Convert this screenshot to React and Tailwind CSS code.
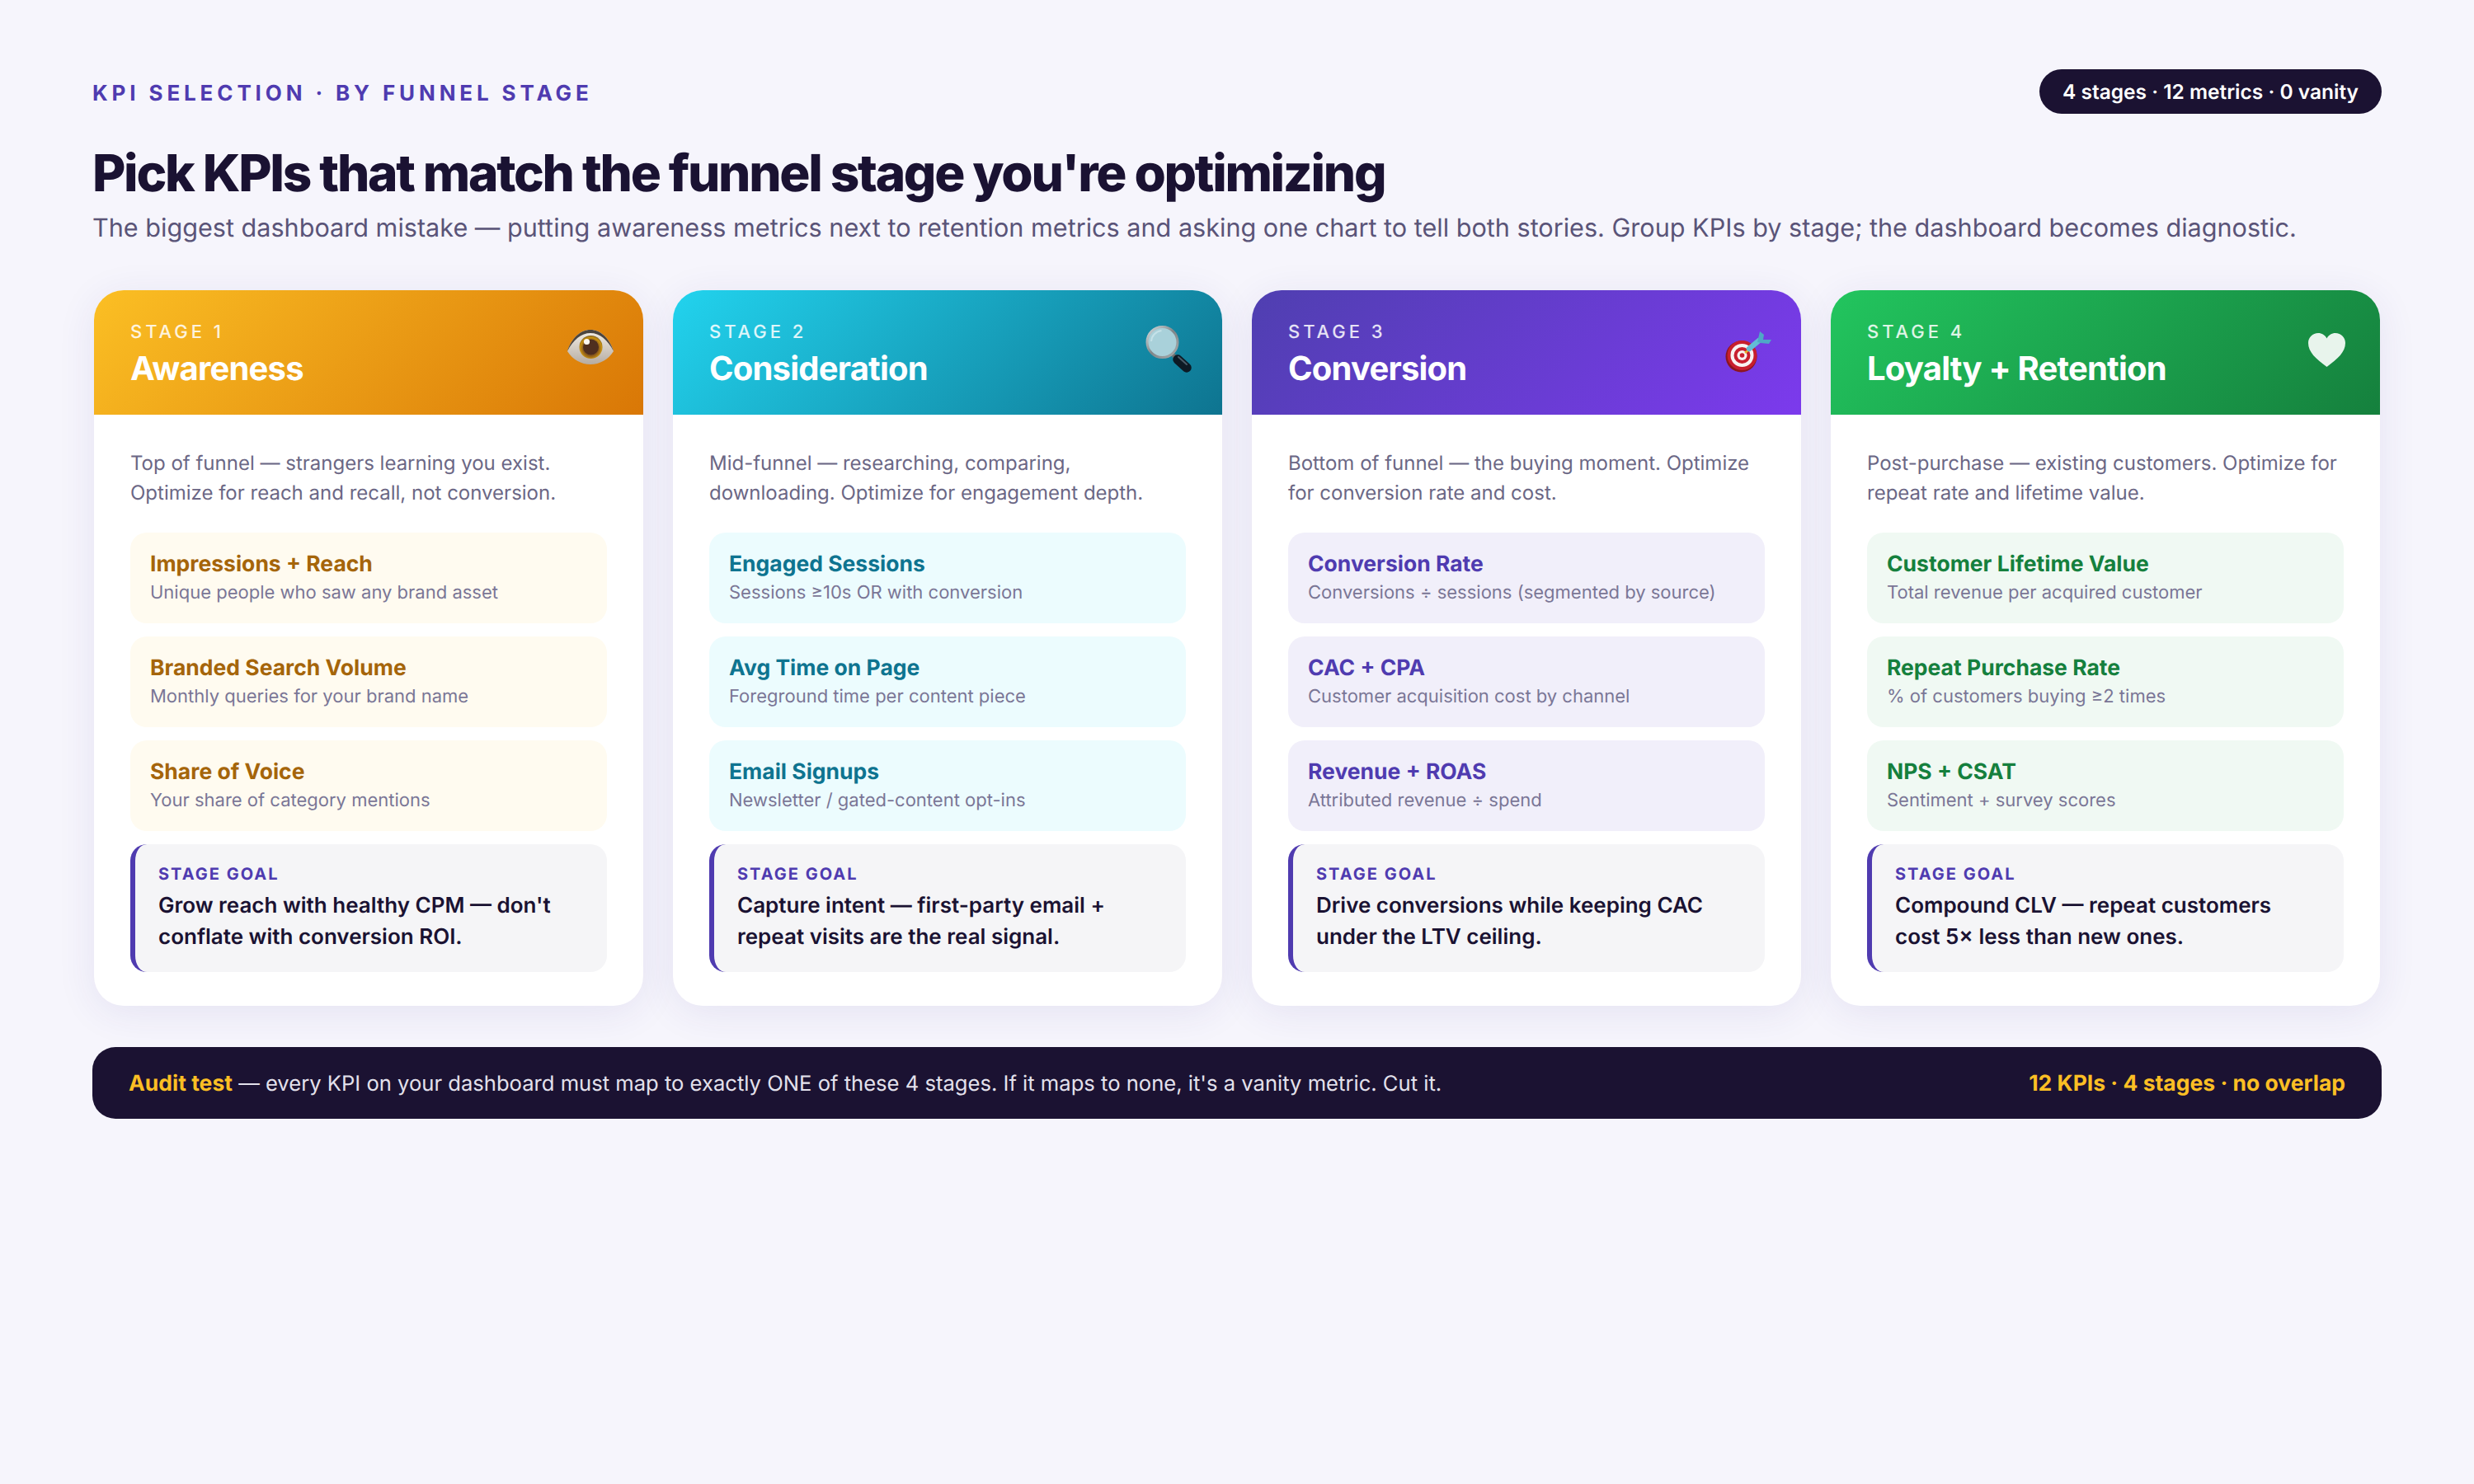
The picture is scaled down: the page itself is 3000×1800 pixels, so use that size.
const stages = [
  {
    label: "STAGE 1",
    name: "Awareness",
    header: "bg-[linear-gradient(135deg,#fbbf24,#d97706)]",
    icon: "eye",
    desc: ["Top of funnel — strangers learning you exist.", "Optimize for reach and recall, not conversion."],
    box: "bg-[#fffbf0]",
    title: "text-[#a5650a]",
    kpis: [
      ["Impressions + Reach", "Unique people who saw any brand asset"],
      ["Branded Search Volume", "Monthly queries for your brand name"],
      ["Share of Voice", "Your share of category mentions"],
    ],
    goal: ["Grow reach with healthy CPM — don't", "conflate with conversion ROI."],
  },
  {
    label: "STAGE 2",
    name: "Consideration",
    header: "bg-[linear-gradient(135deg,#22d3ee,#0e7490)]",
    icon: "search",
    desc: ["Mid-funnel — researching, comparing,", "downloading. Optimize for engagement depth."],
    box: "bg-[#ecfcfe]",
    title: "text-[#0e7490]",
    kpis: [
      ["Engaged Sessions", "Sessions ≥10s OR with conversion"],
      ["Avg Time on Page", "Foreground time per content piece"],
      ["Email Signups", "Newsletter / gated-content opt-ins"],
    ],
    goal: ["Capture intent — first-party email +", "repeat visits are the real signal."],
  },
  {
    label: "STAGE 3",
    name: "Conversion",
    header: "bg-[linear-gradient(135deg,#4f3fb0,#7c3aed)]",
    icon: "target",
    desc: ["Bottom of funnel — the buying moment. Optimize", "for conversion rate and cost."],
    box: "bg-[#f1effa]",
    title: "text-[#4f3bb0]",
    kpis: [
      ["Conversion Rate", "Conversions ÷ sessions (segmented by source)"],
      ["CAC + CPA", "Customer acquisition cost by channel"],
      ["Revenue + ROAS", "Attributed revenue ÷ spend"],
    ],
    goal: ["Drive conversions while keeping CAC", "under the LTV ceiling."],
  },
  {
    label: "STAGE 4",
    name: "Loyalty + Retention",
    header: "bg-[linear-gradient(135deg,#22c55e,#15803d)]",
    icon: "heart",
    desc: ["Post-purchase — existing customers. Optimize for", "repeat rate and lifetime value."],
    box: "bg-[#f0f9f3]",
    title: "text-[#15803d]",
    kpis: [
      ["Customer Lifetime Value", "Total revenue per acquired customer"],
      ["Repeat Purchase Rate", "% of customers buying ≥2 times"],
      ["NPS + CSAT", "Sentiment + survey scores"],
    ],
    goal: ["Compound CLV — repeat customers", "cost 5× less than new ones."],
  },
];

function StageIcon({ name }) {
  if (name === "eye") {
    return (
      <svg width="56" height="56" viewBox="0 0 56 56" className="overflow-visible">
        <defs>
          <linearGradient id="sclera" x1="0" y1="0" x2="0" y2="1">
            <stop offset="0" stopColor="#f4efe6" />
            <stop offset="1" stopColor="#b5aca2" />
          </linearGradient>
          <radialGradient id="iris" cx="0.5" cy="0.55" r="0.55">
            <stop offset="0.6" stopColor="#8a5a1c" />
            <stop offset="0.85" stopColor="#c9920f" />
            <stop offset="1" stopColor="#7a5a22" />
          </radialGradient>
        </defs>
        <path d="M0 30C5 14 16 4 28 4s23 10 28 26C50 40 39 46 28 46S6 40 0 30Z" fill="url(#sclera)" />
        <path d="M0 30C5 14 16 4 28 4s23 10 28 26C49 16 39 8 28 8S7 16 0 30Z" fill="#4c453f" />
        <circle cx="28.5" cy="25" r="14" fill="url(#iris)" />
        <circle cx="28.5" cy="25" r="9.5" fill="#4f2f1f" />
        <circle cx="23.5" cy="18.5" r="3.6" fill="#fdf8f0" />
      </svg>
    );
  }
  if (name === "search") {
    return (
      <svg width="56" height="56" viewBox="0 0 56 56" className="overflow-visible">
        <defs>
          <linearGradient id="ring" x1="0" y1="0" x2="1" y2="1">
            <stop offset="0" stopColor="#d5dde0" />
            <stop offset="0.5" stopColor="#7f8689" />
            <stop offset="1" stopColor="#a9adae" />
          </linearGradient>
        </defs>
        <path d="M30 32l6 6" stroke="#6b7072" strokeWidth="5" />
        <path d="M38 40l11 10" stroke="#0d1a24" strokeWidth="11.5" strokeLinecap="round" />
        <path d="M39 37l10 9" stroke="#4a5a66" strokeWidth="2" strokeLinecap="round" />
        <circle cx="19.5" cy="19" r="18.5" fill="#a9d1da" stroke="url(#ring)" strokeWidth="3" />
        <path d="M6 18A14 14 0 0 1 18.5 5" fill="none" stroke="#c5e2e8" strokeWidth="2" />
      </svg>
    );
  }
  if (name === "target") {
    return (
      <svg width="56" height="56" viewBox="0 0 56 56" className="overflow-visible">
        <circle cx="19.5" cy="36.5" r="19" fill="#8c1620" />
        <circle cx="20.5" cy="35" r="18" fill="#c81f2e" />
        <circle cx="20.5" cy="35" r="14" fill="#f8f3f2" />
        <circle cx="20.5" cy="35" r="10" fill="#c81f2e" />
        <circle cx="20.5" cy="35" r="6" fill="#f8f3f2" />
        <circle cx="20.5" cy="35" r="2.8" fill="#c81f2e" />
        <path d="M24 32l5-4" stroke="#e8b32a" strokeWidth="2.5" />
        <path d="M29 27L41 17" stroke="#62bcd6" strokeWidth="6.5" strokeLinecap="round" />
        <path d="M39 19l3-13 5 4-1 6 10 0-3 5-10-1z" fill="#4fa8c6" />
      </svg>
    );
  }
  return (
    <svg width="56" height="56" viewBox="0 0 56 56" className="overflow-visible">
      <path
        d="M27.5 49C14 39 5 31 5 20 5 13 10.5 8 17 8c4.500 0 8.500 2.500 10.500 6.500C29.500 10.500 33.500 8 38 8c6.500 0 12 5 12 12 0 11-9 19-22.500 29Z"
        fill="#ffffff"
        fillOpacity="0.9"
      />
    </svg>
  );
}

function StageCard({ stage }) {
  return (
    <div className="flex flex-col overflow-hidden rounded-[36px] bg-white shadow-[0_8px_48px_rgba(60,40,140,0.09)]">
      <div className={`flex h-[151px] items-start justify-between pt-[37px] pr-[36px] pl-[44px] ${stage.header}`}>
        <div>
          <div className="text-[22px] leading-[28px] font-medium tracking-[0.18em] text-white/85">{stage.label}</div>
          <div className="mt-[4px] text-[40px] leading-[52px] font-bold tracking-[-0.02em] text-white">{stage.name}</div>
        </div>
        <div className="mt-[7px]">
          <StageIcon name={stage.icon} />
        </div>
      </div>
      <div className="flex flex-col px-[44px] pt-[41px] pb-[41px]">
        <p className="mb-[30px] text-[24px] leading-[36px] text-[#6b6785]">
          {stage.desc[0]}
          <br />
          {stage.desc[1]}
        </p>
        <div className="flex flex-col gap-[16px]">
          {stage.kpis.map((kpi) => (
            <div key={kpi[0]} className={`h-[110px] rounded-[20px] px-[24px] pt-[20px] ${stage.box}`}>
              <div className={`text-[26.5px] leading-[36px] font-bold ${stage.title}`}>{kpi[0]}</div>
              <div className="mt-[1px] text-[22px] leading-[32px] text-[#7a7696]">{kpi[1]}</div>
            </div>
          ))}
          <div className="h-[155px] rounded-[20px] border-l-[6px] border-[#4f3bb0] bg-[#f5f5f7] pt-[22px] pl-[28px]">
            <div className="text-[20px] leading-[28px] font-bold tracking-[0.1em] text-[#4f3bb0]">STAGE GOAL</div>
            <div className="mt-[6px] text-[26px] leading-[38px] font-semibold text-[#1a1232]">
              {stage.goal[0]}
              <br />
              {stage.goal[1]}
            </div>
          </div>
        </div>
      </div>
    </div>
  );
}

export default function App() {
  return (
    <div className="min-h-[1800px] bg-[#f6f5fc] px-[112px] pt-[84px] font-['Inter',sans-serif] [text-rendering:geometricPrecision]">
      <div className="flex h-[54px] items-center justify-between">
        <div className="mt-[4px] text-[26px] font-bold tracking-[4.87px] text-[#4f3bb0]">KPI SELECTION · BY FUNNEL STAGE</div>
        <div className="flex h-[54px] items-center rounded-full bg-[#1b1232] px-[28px] text-[24.5px] font-semibold text-white">
          4 stages · 12 metrics · 0 vanity
        </div>
      </div>
      <h1 className="mt-[36px] text-[62px] leading-[72px] font-extrabold tracking-[-0.037em] whitespace-nowrap text-[#1a1232]">
        Pick KPIs that match the funnel stage you're optimizing
      </h1>
      <p className="mt-[8px] text-[30.6px] leading-[46px] whitespace-nowrap text-[#5a5478]">
        The biggest dashboard mistake — putting awareness metrics next to retention metrics and asking one chart to tell both stories. Group KPIs by stage; the dashboard becomes diagnostic.
      </p>
      <div className="mt-[52px] grid grid-cols-4 gap-[36px] px-[2px]">
        {stages.map((stage) => (
          <StageCard key={stage.label} stage={stage} />
        ))}
      </div>
      <div className="mt-[50px] flex h-[87px] items-center justify-between rounded-[28px] bg-[#1b1232] px-[44px] pt-[2px] text-[25.6px]">
        <div className="text-[#e3e1ec]">
          <span className="text-[26.5px] font-bold text-[#fbbf24]">Audit test</span> — every KPI on your dashboard must map to exactly ONE of these 4 stages. If it maps to none, it's a vanity metric. Cut it.
        </div>
        <div className="text-[26.5px] font-bold text-[#fbbf24]">12 KPIs · 4 stages · no overlap</div>
      </div>
    </div>
  );
}
